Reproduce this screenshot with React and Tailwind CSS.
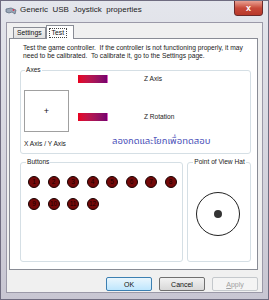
import React from "react";

const F = { fontFamily: '"Liberation Sans", Arial, sans-serif' };

function Circle({ n }) {
  return (
    <div className="w-[12px] h-[12px] rounded-full bg-[#730808] border border-[#1a0000] flex items-center justify-center text-[6.5px] leading-none text-[#1c0000]">
      {n}
    </div>
  );
}

function Btn({ children, def, disabled }) {
  return (
    <div
      className={
        "w-[46px] h-[14px] rounded-[2px] flex items-center justify-center text-[7px] leading-none " +
        (def
          ? "border border-[#3c7fb1] bg-gradient-to-b from-[#eaf6fd] to-[#bee6fd] text-[#111]"
          : disabled
          ? "border border-[#c4c8cc] bg-[#f4f4f4] text-[#a0a0a0]"
          : "border border-[#707070] bg-gradient-to-b from-[#f2f2f2] to-[#d8d8d8] text-[#111]")
      }
    >
      {children}
    </div>
  );
}

export default function App() {
  return (
    <div
      className="w-[269px] h-[300px] bg-gradient-to-b from-[#e4e6ec] to-[#c8c6d2] border border-[#6f6c80] flex flex-col overflow-hidden"
      style={F}
    >
      {/* title bar */}
      <div className="h-[21px] flex items-start shrink-0">
        <svg width="12" height="9" viewBox="0 0 12 9" className="ml-[4px] mt-[5px]">
          <path d="M1 3 L6 2 L11 4 L10 8 L7 6 L4 7 L1 6 Z" fill="#9aa7b8" stroke="#55657a" strokeWidth="0.7" />
          <circle cx="8.5" cy="4" r="0.9" fill="#d34" />
        </svg>
        <div className="ml-[3px] mt-[4px] text-[8px] leading-[10px] text-[#1c1c1c] whitespace-pre">Generic  USB  Joystick  properties</div>
        <div className="ml-auto mr-[5px] w-[29px] h-[16px] -mt-[1px] rounded-b-[3px] border border-[#6b2a2a] bg-gradient-to-b from-[#e8a093] via-[#c74a3a] to-[#b8382a] flex items-center justify-center text-white text-[9px] font-bold leading-none">
          x
        </div>
      </div>

      {/* client */}
      <div className="mx-[5px] flex-1 bg-[#f0f0f0] border border-[#9b99a8] flex flex-col mb-[6px]">
        {/* tabs */}
        <div className="flex items-end h-[15px] pl-[6px]">
          <div className="h-[11px] px-[3px] border border-b-0 border-[#898c95] bg-gradient-to-b from-[#f2f2f2] to-[#e0e0e0] text-[6.8px] leading-[10px] text-[#111]">
            Settings
          </div>
          <div className="h-[14px] w-[28px] px-[2px] pt-[2px] border border-b-0 border-[#898c95] bg-white relative -mb-[1px] z-10">
            <div className="border border-dotted border-[#444] text-[6.8px] leading-[8px] text-[#111] px-[2px] w-fit">Test</div>
          </div>
        </div>

        {/* panel */}
        <div className="ml-[2px] mr-[4px] h-[232px] bg-white border border-[#898c95] flex flex-col pl-[10px] pr-[6px]">
          <div className="pl-[3px] pt-[5px] text-[6.7px] leading-[8px] text-[#1a1a1a] whitespace-pre">
            {"Test the game controller.  If the controller is not functioning properly, it may\nneed to be calibrated.  To calibrate it, go to the Settings page."}
          </div>

          {/* axes */}
          <div className="mt-[10px] h-[84px] border border-[#d5dfe5] rounded-[3px] relative flex">
            <div className="absolute -top-[5px] left-[4px] bg-white px-[1px] text-[6.6px] leading-[8px] text-[#222]">Axes</div>
            <div className="ml-[3px] flex flex-col">
              <div className="mt-[19px] w-[45px] h-[42px] border border-[#a0a0a0] flex items-center justify-center text-[9px] leading-none text-[#111]">+</div>
              <div className="mt-[8px] text-[6.6px] leading-[8px] text-[#222] whitespace-pre">X Axis / Y Axis</div>
            </div>
            <div className="ml-[9px] flex flex-col">
              <div className="mt-[4px] flex items-center">
                <div className="w-[30px] h-[8px] bg-gradient-to-r from-[#e8001c] to-[#78006e] border-r border-[#e060c0]"></div>
                <div className="ml-[36px] text-[6.6px] leading-[8px] text-[#222]">Z Axis</div>
              </div>
              <div className="mt-[30px] flex items-center">
                <div className="w-[30px] h-[8px] bg-gradient-to-r from-[#e8001c] to-[#78006e] border-r border-[#e060c0]"></div>
                <div className="ml-[36px] text-[6.6px] leading-[8px] text-[#222]">Z Rotation</div>
              </div>
              <div className="mt-[14px] ml-[34px] text-[9.5px] leading-[12px] text-[#4a4fb8]" style={{ fontFamily: '"Noto Sans Thai", "Noto Sans", "DejaVu Sans", sans-serif' }}>
                ลองกดและโยกเพื่อทดสอบ
              </div>
            </div>
          </div>

          {/* buttons + pov */}
          <div className="mt-[8px] flex gap-[4px]">
            <div className="w-[164px] h-[100px] border border-[#d5dfe5] rounded-[3px] relative pl-[7px] pt-[13px]">
              <div className="absolute -top-[5px] left-[5px] bg-white px-[1px] text-[6.6px] leading-[8px] text-[#222]">Buttons</div>
              <div className="grid grid-cols-[repeat(8,12px)] gap-x-[7.5px] gap-y-[10px]">
                {[1, 2, 3, 4, 5, 6, 7, 8, 9, 10, 11, 12].map((n) => (
                  <Circle key={n} n={n} />
                ))}
              </div>
            </div>
            <div className="w-[64px] h-[100px] border border-[#d5dfe5] rounded-[3px] relative pl-[8px] pt-[29px]">
              <div className="absolute -top-[5px] left-[5px] bg-white px-[1px] text-[6.6px] leading-[8px] text-[#222] whitespace-nowrap">Point of View Hat</div>
              <div className="w-[44px] h-[44px] rounded-full border border-[#222] flex items-center justify-center">
                <div className="w-[8px] h-[8px] rounded-full bg-[#333]"></div>
              </div>
            </div>
          </div>
        </div>

        {/* dialog buttons */}
        <div className="flex justify-end gap-[7px] mr-[4px] mt-[7px]">
          <Btn def>OK</Btn>
          <Btn>Cancel</Btn>
          <Btn disabled>
            <span className="underline">A</span>pply
          </Btn>
        </div>
      </div>
    </div>
  );
}
